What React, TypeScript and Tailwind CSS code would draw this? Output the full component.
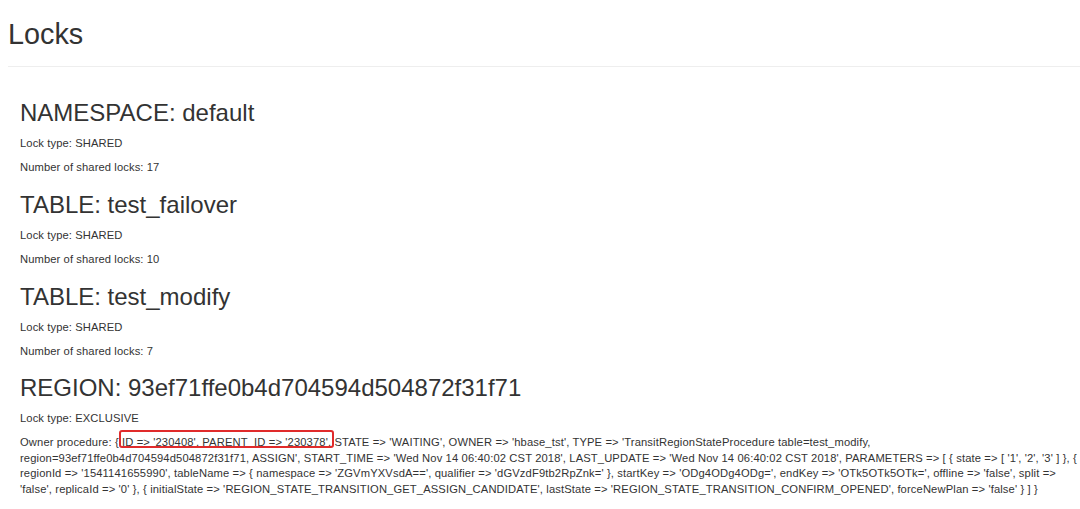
import React from "react";

type Sec = { title: string; lines: string[] };

const sections: Sec[] = [
  { title: "NAMESPACE: default", lines: ["Lock type: SHARED", "Number of shared locks: 17"] },
  { title: "TABLE: test_failover", lines: ["Lock type: SHARED", "Number of shared locks: 10"] },
  { title: "TABLE: test_modify", lines: ["Lock type: SHARED", "Number of shared locks: 7"] },
];

export default function App() {
  return (
    <div
      className="min-h-[509px] w-[1080px] bg-white text-[#333] overflow-hidden"
      style={{ fontFamily: '"Liberation Sans", Arial, sans-serif' }}
    >
      <div className="pl-[8px]">
        <h1 className="pt-[18px] text-[28.8px] leading-[32px] font-normal">Locks</h1>
        <div className="mt-[16px] h-px w-full bg-[#eeeeee]" />
      </div>
      <div className="pl-[20px] pr-[8px] pt-[16px]">
        {sections.map((s) => (
          <div key={s.title}>
            <h2 className="mt-[16px] mb-[8px] text-[24px] leading-[28px] font-normal">{s.title}</h2>
            {s.lines.map((l) => (
              <p key={l} className="mb-[8px] text-[11.2px] leading-[16px] tracking-[0.1px]">
                {l}
              </p>
            ))}
          </div>
        ))}
        <div>
          <h2 className="mt-[15px] mb-[8px] text-[24px] leading-[28px] font-normal">
            REGION: 93ef71ffe0b4d704594d504872f31f71
          </h2>
          <p className="mb-[9px] text-[11.2px] leading-[16px] tracking-[0.1px]">Lock type: EXCLUSIVE</p>
          <p className="whitespace-nowrap text-[11.2px] leading-[15.5px] tracking-[0.13px]">
            Owner procedure: {"{ "}
            <span className="relative">
              ID =&gt; '230408', PARENT_ID =&gt; '230378',
              <span className="absolute left-[-3px] right-[-3px] top-[-6.5px] bottom-[0px] rounded-[3px] border-2 border-[#e02b2b]" />
            </span>{" "}
            STATE =&gt; 'WAITING', OWNER =&gt; 'hbase_tst', TYPE =&gt; 'TransitRegionStateProcedure table=test_modify,
            <br />
            region=93ef71ffe0b4d704594d504872f31f71, ASSIGN', START_TIME =&gt; 'Wed Nov 14 06:40:02 CST 2018', LAST_UPDATE =&gt; 'Wed Nov 14 06:40:02 CST 2018', PARAMETERS =&gt; [ {"{"} state =&gt; [ '1', '2', '3' ] {"}"}, {"{"}
            <br />
            regionId =&gt; '1541141655990', tableName =&gt; {"{"} namespace =&gt; 'ZGVmYXVsdA==', qualifier =&gt; 'dGVzdF9tb2RpZnk=' {"}"}, startKey =&gt; 'ODg4ODg4ODg=', endKey =&gt; 'OTk5OTk5OTk=', offline =&gt; 'false', split =&gt;
            <br />
            'false', replicaId =&gt; '0' {"}"}, {"{"} initialState =&gt; 'REGION_STATE_TRANSITION_GET_ASSIGN_CANDIDATE', lastState =&gt; 'REGION_STATE_TRANSITION_CONFIRM_OPENED', forceNewPlan =&gt; 'false' {"}"} ] {"}"}
          </p>
        </div>
      </div>
    </div>
  );
}
